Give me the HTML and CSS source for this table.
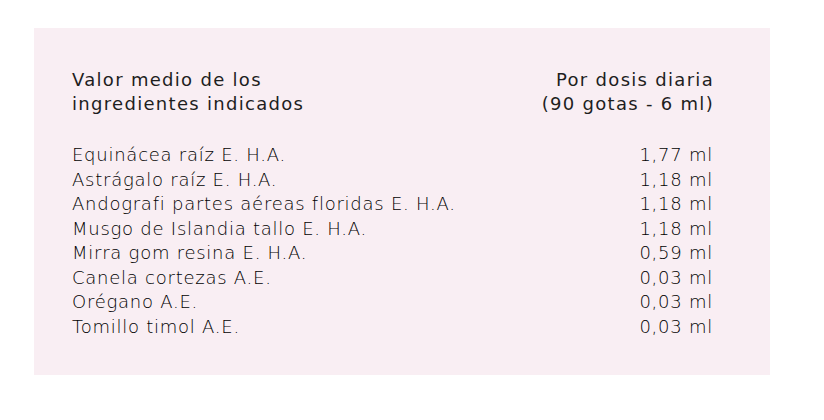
FILE: index.html
```html
<!DOCTYPE html>
<html lang="es">
<head>
<meta charset="utf-8">
<title>Composición</title>
<link rel="stylesheet" href="styles.css">
</head>
<body>
<section class="panel">
  <div class="head">
    <div class="head-name">Valor medio de los<br>ingredientes indicados</div>
    <div class="head-dose">Por dosis diaria<br>(90 gotas - 6 ml)</div>
  </div>
  <ul class="rows">
    <li class="row"><span>Equinácea raíz E. H.A.</span><span>1,77 ml</span></li>
    <li class="row"><span>Astrágalo raíz E. H.A.</span><span>1,18 ml</span></li>
    <li class="row"><span>Andografi partes aéreas floridas E. H.A.</span><span>1,18 ml</span></li>
    <li class="row"><span>Musgo de Islandia tallo E. H.A.</span><span>1,18 ml</span></li>
    <li class="row"><span>Mirra gom resina E. H.A.</span><span>0,59 ml</span></li>
    <li class="row"><span>Canela cortezas A.E.</span><span>0,03 ml</span></li>
    <li class="row"><span>Orégano A.E.</span><span>0,03 ml</span></li>
    <li class="row"><span>Tomillo timol A.E.</span><span>0,03 ml</span></li>
  </ul>
</section>
</body>
</html>
```
FILE: styles.css
```css
html, body {
  margin: 0;
  padding: 0;
  background: #ffffff;
}
body {
  padding: 28px 54px 45px 34px;
  font-family: "DejaVu Sans", "Open Sans", sans-serif;
  color: #1e1e1e;
}
.panel {
  width: 736px;
  height: 347px;
  box-sizing: border-box;
  background: #f9eef3;
  padding: 40px 57px 0 38px;
}
.head {
  display: flex;
  justify-content: space-between;
  font-size: 18px;
  line-height: 24px;
  font-weight: 400;
  letter-spacing: 1.3px;
}
.head-dose {
  text-align: right;
  margin-right: -1px;
}
.rows {
  list-style: none;
  margin: 27px 0 0 0;
  padding: 0;
  font-size: 18px;
  line-height: 24.5px;
  font-weight: 200;
  letter-spacing: 0.75px;
  color: #000000;
}
.row {
  display: flex;
  justify-content: space-between;
}
```
